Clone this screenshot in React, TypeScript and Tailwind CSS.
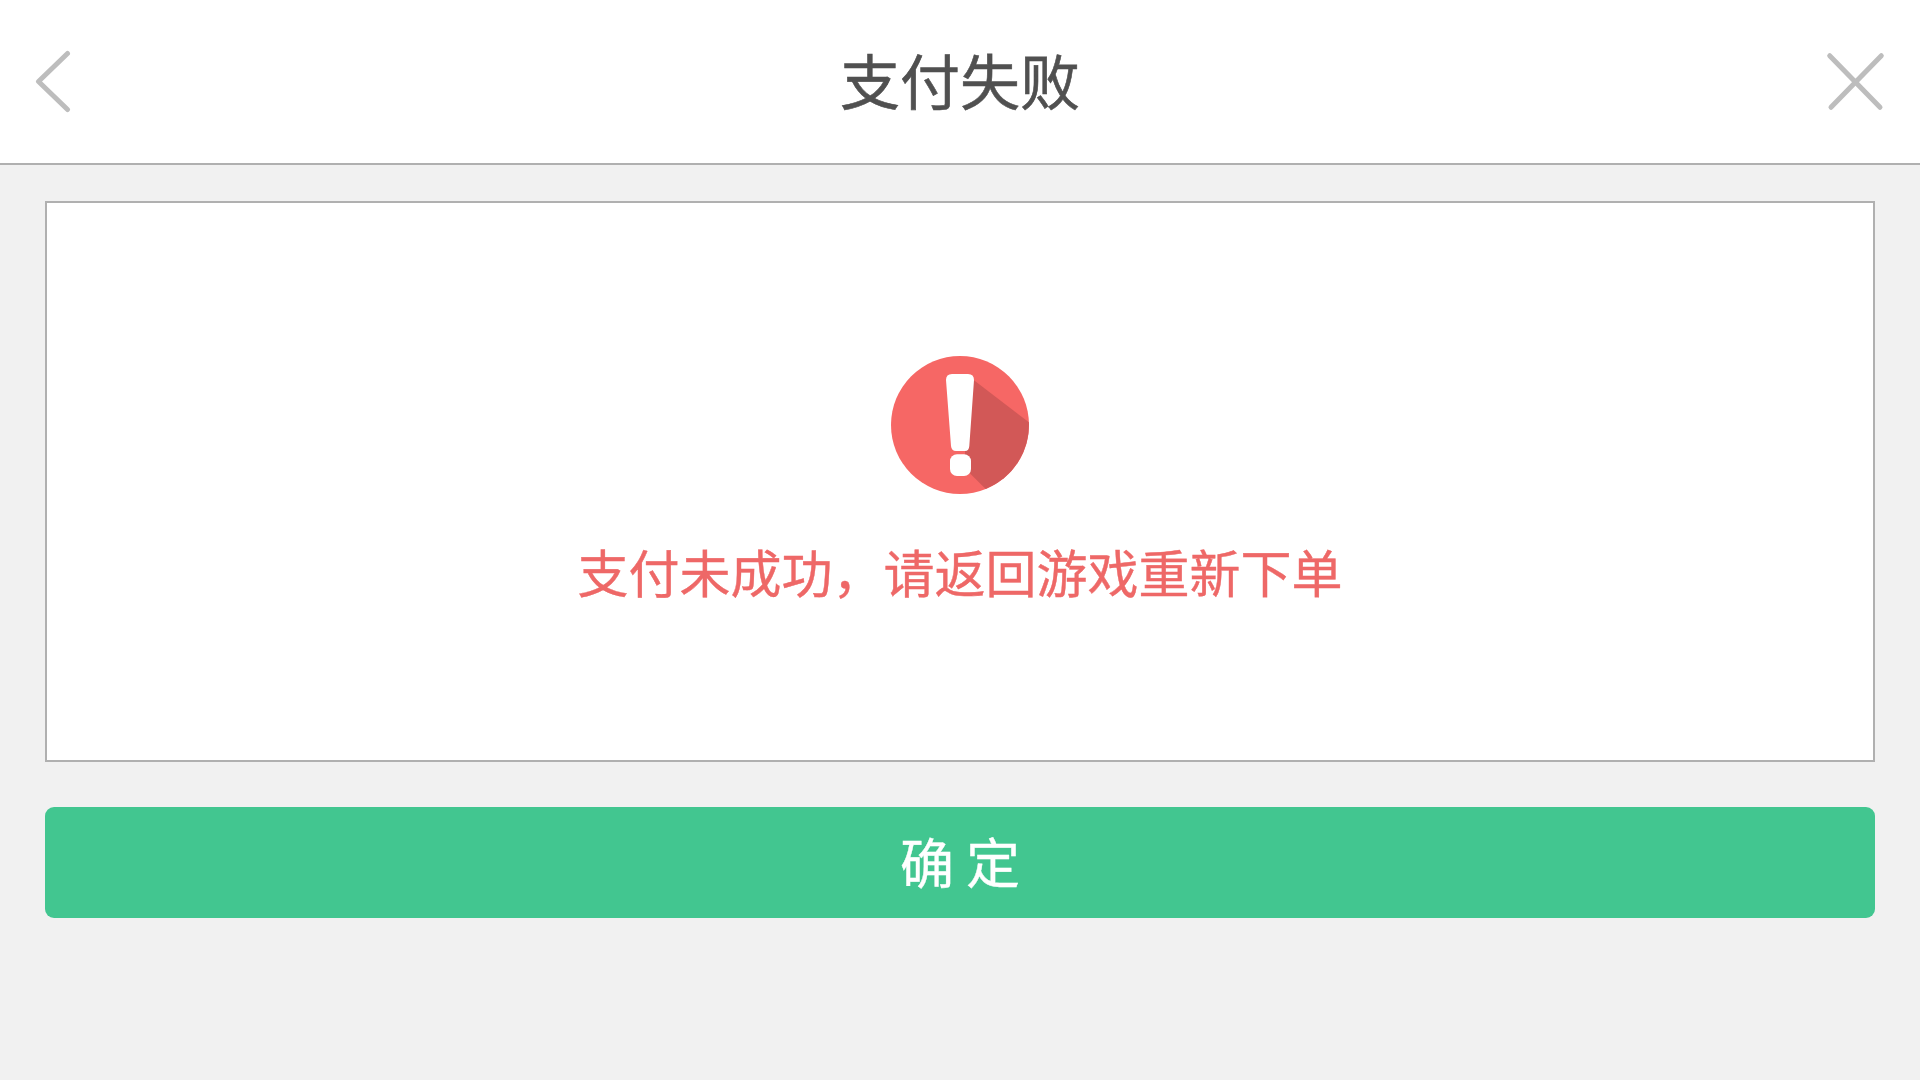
export default function App() {
  return (
    <div className="flex h-[1080px] w-[1920px] flex-col bg-[#f1f1f1] font-['Noto_Sans_CJK_SC','Noto_Sans',sans-serif]">
      <header className="flex h-[165px] items-center justify-between border-b-2 border-[#b0b0b0] bg-white px-[34px]">
        <button aria-label="返回" className="w-[60px]">
          <svg width="40" height="63" viewBox="0 0 40 63" fill="none" stroke="#bdbdbd" strokeWidth="5" strokeLinecap="round" strokeLinejoin="round">
            <path d="M33.5 3.5 4.5 31.5 33.5 59.5" />
          </svg>
        </button>
        <h1 className="pb-[6px] text-[60px] leading-[88px] text-[#505050] [-webkit-text-stroke:0.6px_#505050]">支付失败</h1>
        <button aria-label="关闭" className="flex w-[60px] justify-end">
          <svg width="60" height="61" viewBox="0 0 60 61" fill="none" stroke="#bdbdbd" strokeWidth="5" strokeLinecap="round">
            <path d="M3.7 4.7 54 56.3M55.3 4.7 5 56.3" />
          </svg>
        </button>
      </header>
      <main className="flex flex-col px-[45px] pt-[36px]">
        <section className="flex h-[561px] flex-col items-center border-2 border-[#b0b0b0] bg-white pt-[152px]">
          <svg width="140" height="140" viewBox="0 0 140 140">
            <circle cx="70" cy="70" r="69" fill="#f66765" />
            <path d="M83 24.5 138.9 67.3A69 69 0 0 1 95.7 134L75 113.5V95Z" fill="#d25857" />
            <path d="M62 19H78Q84 19 84 25L79.3 91Q79 96 75 96H66Q61.5 96 61 91L56 25Q56 19 62 19Z" fill="#fff" />
            <rect x="60" y="99.3" width="21" height="21.7" rx="7" fill="#fff" />
          </svg>
          <p className="mt-[38px] text-[51px] leading-[76px] text-[#ee6867] [-webkit-text-stroke:0.4px_#ee6867]">支付未成功，请返回游戏重新下单</p>
        </section>
        <button className="mt-[45px] h-[111px] rounded-[9px] bg-[#42c690] pb-[4px] text-[54px] leading-none text-white [-webkit-text-stroke:0.4px_white]">确 定</button>
      </main>
    </div>
  );
}
